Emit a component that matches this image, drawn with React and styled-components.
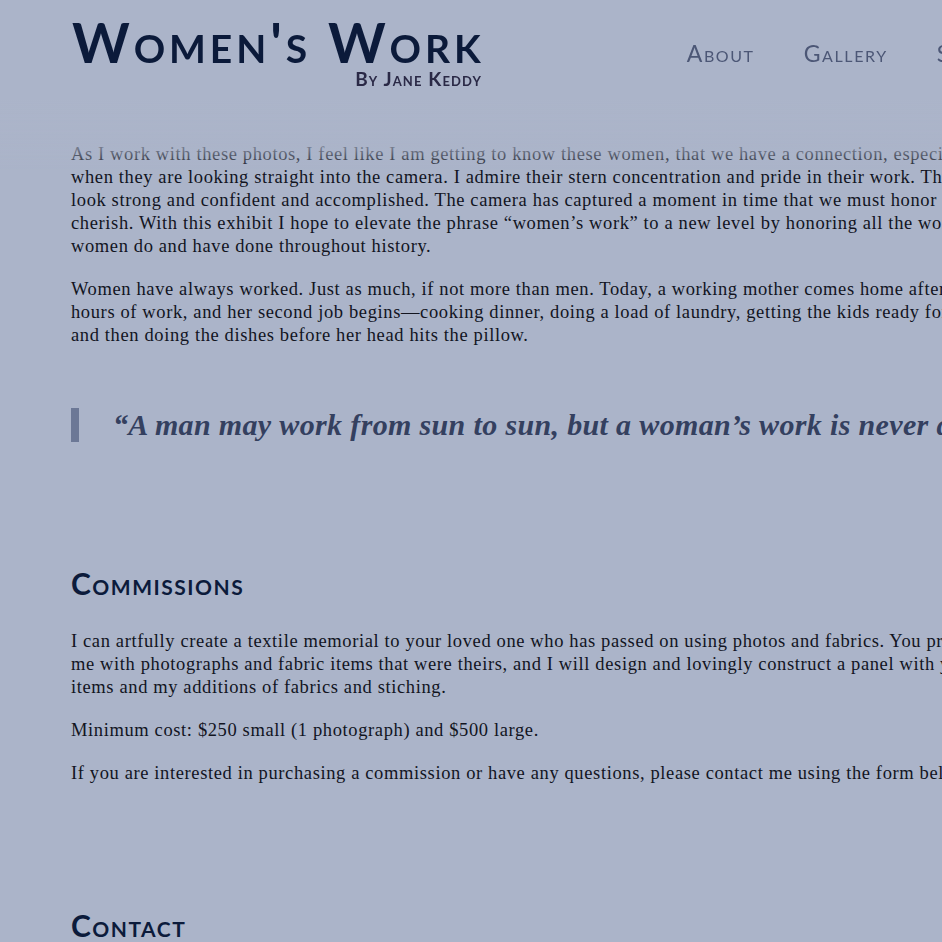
import React from "react";
import styled, { createGlobalStyle } from "styled-components";

const Global = createGlobalStyle`
  html, body {
    margin: 0;
    padding: 0;
    background: #abb4c9;
    overflow: hidden;
  }
  body {
    font-family: "Liberation Serif", "Times New Roman", serif;
    color: #12141f;
  }
`;

const Header = styled.header`
  position: fixed;
  top: 0;
  left: 0;
  right: 0;
  height: 180px;
  display: flex;
  align-items: flex-start;
  padding: 17px 0 0 72px;
  box-sizing: border-box;
  white-space: nowrap;
  background: linear-gradient(
    to bottom,
    rgba(171, 180, 201, 1) 0px,
    rgba(171, 180, 201, 1) 100px,
    rgba(171, 180, 201, 0.92) 120px,
    rgba(171, 180, 201, 0.62) 150px,
    rgba(171, 180, 201, 0) 170px
  );
  z-index: 10;
`;

const Brand = styled.div`
  display: flex;
  flex-direction: column;
  align-items: flex-end;
`;

const Title = styled.h1`
  margin: 0 -3.9px 0 0;
  font-family: Lato, "Noto Sans", sans-serif;
  font-weight: 700;
  font-size: 55px;
  line-height: 50px;
  font-variant: small-caps;
  letter-spacing: 3.9px;
  color: #0b1a3a;
`;

const Byline = styled.div`
  margin: 2px -1.2px 0 0;
  font-family: Lato, "Noto Sans", sans-serif;
  font-weight: 700;
  font-size: 19px;
  line-height: 20px;
  font-variant: small-caps;
  letter-spacing: 1.1px;
  color: #2a2946;
`;

const Nav = styled.nav`
  display: flex;
  gap: 49px;
  margin-left: 206px;
  padding-top: 21px;
`;

const NavLink = styled.a`
  font-family: Lato, "Noto Sans", sans-serif;
  font-weight: 400;
  font-size: 23px;
  line-height: 30px;
  font-variant: small-caps;
  letter-spacing: 1.6px;
  color: #4c5776;
  text-decoration: none;
`;

const Main = styled.main`
  padding: 143px 0 0 71px;
  width: 1400px;
`;

const Para = styled.p`
  margin: 0 0 20px;
  font-size: 18.5px;
  line-height: 23px;
  white-space: nowrap;
  letter-spacing: 0.62px;
`;

const Quote = styled.blockquote`
  margin: 61px 0 0;
  border-left: 8px solid #6c7896;
  padding-left: 34px;
  font-family: "Liberation Serif", "Times New Roman", serif;
  font-style: italic;
  font-weight: 700;
  font-size: 30px;
  line-height: 34px;
  letter-spacing: 0.35px;
  color: #34405f;
  white-space: nowrap;
`;

const Section = styled.section`
  margin-top: ${(p) => p.$top}px;
`;

const Heading = styled.h2`
  margin: 0 0 29px;
  font-family: Lato, "Noto Sans", sans-serif;
  font-weight: 700;
  font-size: 30px;
  line-height: 36px;
  font-variant: small-caps;
  letter-spacing: 1.5px;
  color: #0c1b3b;
`;

const Lines = ({ lines }) => (
  <Para>
    {lines.map((l, i) => (
      <React.Fragment key={i}>
        {l}
        {i < lines.length - 1 && <br />}
      </React.Fragment>
    ))}
  </Para>
);

export default function App() {
  return (
    <>
      <Global />
      <Header>
        <Brand>
          <Title>Women's Work</Title>
          <Byline>By Jane Keddy</Byline>
        </Brand>
        <Nav>
          <NavLink href="#about">About</NavLink>
          <NavLink href="#gallery">Gallery</NavLink>
          <NavLink href="#shop">Shop</NavLink>
        </Nav>
      </Header>
      <Main>
        <Lines
          lines={[
            "As I work with these photos, I feel like I am getting to know these women, that we have a connection, especially",
            "when they are looking straight into the camera. I admire their stern concentration and pride in their work. They",
            "look strong and confident and accomplished. The camera has captured a moment in time that we must honor and",
            "cherish. With this exhibit I hope to elevate the phrase \u201cwomen\u2019s work\u201d to a new level by honoring all the work",
            "women do and have done throughout history.",
          ]}
        />
        <Lines
          lines={[
            "Women have always worked. Just as much, if not more than men. Today, a working mother comes home after",
            "hours of work, and her second job begins\u2014cooking dinner, doing a load of laundry, getting the kids ready for bed,",
            "and then doing the dishes before her head hits the pillow.",
          ]}
        />
        <Quote>
          {"\u201cA man may work from sun to sun, but a woman\u2019s work is never done.\u201d"}
        </Quote>
        <Section $top={123}>
          <Heading>Commissions</Heading>
          <Lines
            lines={[
              "I can artfully create a textile memorial to your loved one who has passed on using photos and fabrics. You provide",
              "me with photographs and fabric items that were theirs, and I will design and lovingly construct a panel with your",
              "items and my additions of fabrics and stiching.",
            ]}
          />
          <Lines lines={["Minimum cost: $250 small (1 photograph) and $500 large."]} />
          <Lines
            lines={[
              "If you are interested in purchasing a commission or have any questions, please contact me using the form below.",
            ]}
          />
        </Section>
        <Section $top={122}>
          <Heading>Contact</Heading>
        </Section>
      </Main>
    </>
  );
}
